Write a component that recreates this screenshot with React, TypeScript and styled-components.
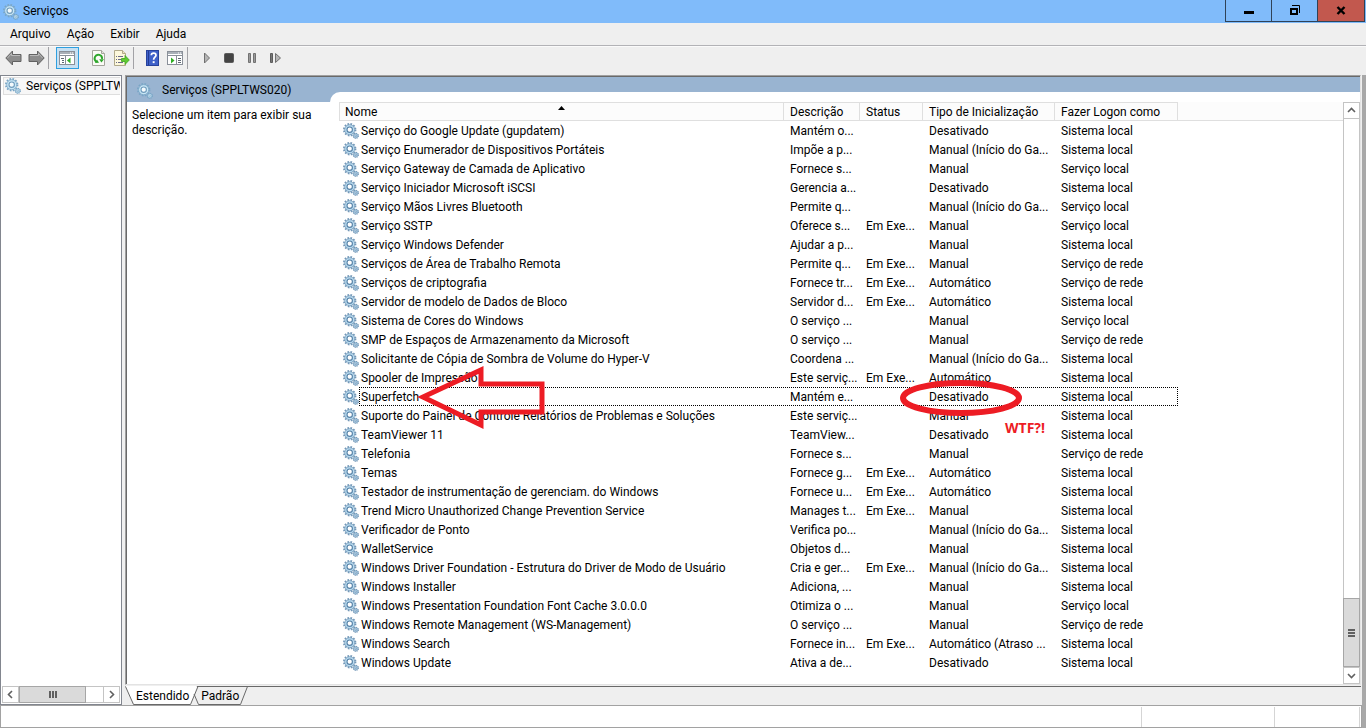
import React from "react";
import styled, { createGlobalStyle } from "styled-components";

const GlobalStyle = createGlobalStyle`
  *, *::before, *::after { box-sizing: border-box; }
  body {
    margin: 0;
    background: #efefef;
    color: #000;
    font: 12px/15px Roboto, "Open Sans", sans-serif;
  }
  button { font: inherit; color: inherit; padding: 0; margin: 0; }
  svg { flex: none; }
`;

const Window = styled.div`
  display: flex;
  flex-direction: column;
  height: 100vh;
  overflow: hidden;
`;

/* ---------- title bar ---------- */

const TitleBar = styled.header`
  display: flex;
  align-items: flex-start;
  height: 23px;
  flex: none;
  padding-left: 3px;
  background: #80bbfa;
`;

const Title = styled.h1`
  flex: 1;
  display: flex;
  align-items: center;
  gap: 4px;
  height: 23px;
  margin: 0;
  font-size: 12px;
  font-weight: 400;
`;

const CaptionButtons = styled.div`
  display: flex;
  height: 22px;
  margin-right: 1px;
  border: 1px solid #2f4257;
  border-top: 0;
`;

const CaptionButton = styled.button<{ $close?: boolean }>`
  display: flex;
  align-items: center;
  justify-content: center;
  width: 46px;
  border: 0;
  border-right: 1px solid #2f4257;
  background: ${(p) => (p.$close ? "#c2584e" : "transparent")};
  &:last-child { border-right: 0; }
`;

/* ---------- menu and toolbar ---------- */

const MenuBar = styled.nav`
  display: flex;
  align-items: center;
  gap: 16px;
  flex: none;
  height: 23px;
  padding: 0 10px;
  border-bottom: 1px solid #b2b2b6;
`;

const MenuItem = styled.button`
  border: 0;
  background: none;
`;

const Toolbar = styled.div`
  display: flex;
  align-items: center;
  flex: none;
  height: 29px;
  padding: 0 2px 6px;
  border-top: 1px solid #fafafa;
`;

const ToolButton = styled.button<{ $active?: boolean }>`
  display: flex;
  align-items: center;
  justify-content: center;
  width: 23px;
  height: 22px;
  border: 1px solid ${(p) => (p.$active ? "#2e9fdf" : "transparent")};
  background: ${(p) => (p.$active ? "#c7e0f2" : "none")};
`;

const ToolDivider = styled.span`
  width: 1px;
  height: 22px;
  margin-right: 7px;
  background: #a2a2a6;
`;

const ToolGroup = styled.div`
  display: flex;
  padding-left: 8px;
`;

/* ---------- panels ---------- */

const Body = styled.main`
  display: flex;
  flex: 1;
  min-height: 0;
`;

const TreePanel = styled.aside`
  display: flex;
  flex-direction: column;
  width: 122px;
  flex: none;
  padding: 1px;
  border: 1px solid #82868f;
  background: #fff;
`;

const TreeArea = styled.div`
  flex: 1;
  padding-left: 1px;
  overflow: hidden;
`;

const TreeItem = styled.div`
  display: flex;
  align-items: center;
  gap: 5px;
  width: 160px;
  height: 18px;
  padding-left: 1px;
  border: 1px solid #dedede;
  background: #f7f7f7;
  white-space: nowrap;
`;

const HScroll = styled.div`
  display: flex;
  height: 17px;
  border: 1px solid #c4c4c4;
`;

const HScrollThumb = styled.div`
  display: flex;
  align-items: center;
  justify-content: center;
  width: 67px;
  margin: -1px 0;
  border: 1px solid #a6a6a6;
  background: #dadada;
`;

const HTrack = styled.div`
  flex: 1;
  background: #fff;
`;

const ScrollArrow = styled.button<{ $edge: "left" | "right" | "top" | "bottom" }>`
  display: flex;
  align-items: center;
  justify-content: center;
  flex: none;
  width: ${(p) => (p.$edge === "left" || p.$edge === "right" ? 16 : 15)}px;
  height: ${(p) => (p.$edge === "left" || p.$edge === "right" ? 15 : 16)}px;
  border: 0 solid #c4c4c4;
  background: #fff;
  border-${(p) => ({ left: "right", right: "left", top: "bottom", bottom: "top" })[p.$edge]}-width: 1px;
`;

const DetailColumn = styled.section`
  display: flex;
  flex-direction: column;
  flex: 1;
  min-width: 0;
  margin: 0 1px 0 3px;
`;

const DetailPanel = styled.div`
  display: flex;
  flex-direction: column;
  flex: 1;
  min-height: 0;
  border: 1px solid #e3e3e3;
  border-top-color: #a0a0a0;
  border-left-color: #a0a0a0;
  background: #fff;
`;

const DetailInner = styled.div`
  display: grid;
  grid-template-columns: 203px minmax(0, 1fr);
  grid-template-rows: 15px 10px minmax(0, 1fr);
  flex: 1;
  min-height: 0;
  border-top: 1px solid #696969;
  border-left: 1px solid #696969;
`;

const DetailTitle = styled.h2`
  display: flex;
  align-items: center;
  gap: 9px;
  grid-area: 1 / 1 / 3 / 2;
  margin: 0;
  padding: 2px 0 0 10px;
  background: #99b4d1;
  font-size: 12px;
  font-weight: 400;
`;

const TitleBand = styled.div`
  grid-area: 1 / 2 / 2 / 3;
  background: #99b4d1;
`;

const CurvedEdge = styled.div`
  grid-area: 2 / 2 / 3 / 3;
  background: #99b4d1;
  &::before {
    content: "";
    display: block;
    height: 100%;
    border-top-left-radius: 10px;
    background: #fff;
  }
`;

const Hint = styled.p`
  grid-area: 3 / 1 / 4 / 2;
  margin: 0;
  padding: 6px 8px 0 5px;
`;

const ListPane = styled.div`
  display: flex;
  grid-area: 3 / 2 / 4 / 3;
  min-height: 0;
  padding-left: 9px;
`;

const ListBody = styled.div`
  position: relative;
  flex: 1;
  min-width: 0;
  overflow: hidden;
`;

const ServiceTable = styled.table`
  width: 100%;
  table-layout: fixed;
  border-collapse: separate;
  border-spacing: 0;
`;

const Column = styled.col<{ $width?: number }>`
  width: ${(p) => (p.$width ? `${p.$width}px` : "auto")};
`;

const HeadCell = styled.th<{ $filler?: boolean }>`
  height: 19px;
  padding: 2px 6px 0;
  border: 1px solid #dfdfdf;
  border-left: 0;
  border-right-width: ${(p) => (p.$filler ? 0 : 1)}px;
  border-top-color: ${(p) => (p.$filler ? "#fcfcfc" : "#dfdfdf")};
  background: #fcfcfc;
  font-weight: 400;
  text-align: left;
  white-space: nowrap;
  &:first-child {
    padding: 2px 5px 0;
    border-left: 1px solid #dfdfdf;
  }
`;

const SortLabel = styled.div`
  display: grid;
  grid-template-columns: 1fr auto 1fr;
`;

const SortArrow = styled.svg`
  display: block;
`;

const Cell = styled.td`
  height: 19px;
  padding: 2px 6px 0;
  line-height: 17px;
  white-space: nowrap;
  overflow: hidden;
`;

const NameCell = styled(Cell)`
  padding: 2px 4px 0;
`;

const ServiceName = styled.div`
  display: flex;
  align-items: flex-start;
  gap: 2px;
`;

const FocusRing = styled.div`
  position: absolute;
  top: 285px;
  left: 20px;
  width: 819px;
  height: 19px;
  border: 1px dotted #000;
`;

const Marks = styled.svg`
  position: absolute;
  top: 260px;
  left: 78px;
`;

const Remark = styled.span`
  position: absolute;
  top: 318px;
  left: 666px;
  color: #ed1c24;
  font: 700 14px/16px "Open Sans", sans-serif;
`;

const VScroll = styled.div`
  display: flex;
  flex-direction: column;
  flex: none;
  width: 17px;
  border: 1px solid #c4c4c4;
`;

const VTrack = styled.div`
  flex: 1;
`;

const VScrollThumb = styled.div`
  display: flex;
  align-items: center;
  justify-content: center;
  height: 69px;
  margin: 0 -1px;
  border: 1px solid #a6a6a6;
  background: #dadada;
`;

/* ---------- tabs and status ---------- */

const TabStrip = styled.div`
  position: relative;
  display: flex;
  flex: none;
  height: 19px;
  padding-left: 11px;
  margin-top: 1px;
  gap: 12px;
  border-top: 1px solid #696969;
`;

const TabShapes = styled.svg`
  position: absolute;
  top: -1px;
  left: 0;
`;

const Tab = styled.button`
  position: relative;
  border: 0;
  background: none;
`;

const RightEdge = styled.div`
  width: 4px;
  flex: none;
  background: #a8a8a8;
`;

const StatusRow = styled.footer`
  display: flex;
  flex: none;
  height: 23px;
`;

const StatusBar = styled.div`
  display: flex;
  justify-content: flex-end;
  flex: 1;
  padding-top: 1px;
  padding-right: 1px;
  border: 1px solid #a2a2a2;
  background: #fff;
`;

const StatusField = styled.div<{ $width: number }>`
  width: ${(p) => p.$width}px;
  border-left: 1px solid #d5d5d5;
  &:last-child { border-right: 1px solid #d5d5d5; }
`;

/* ---------- drawings ---------- */

const Gears = ({ pale = false }: { pale?: boolean }) => {
  const edge = pale ? "#79a6c6" : "#7398b8";
  const fill = pale ? "#c9e7f6" : "#b9dcf1";
  const hub = pale ? "#6f9cbd" : "#5580a6";
  return (
    <svg width="16" height="16" viewBox="0 0 16 16" aria-hidden="true">
      <circle cx="6.7" cy="6.7" r="5.8" fill="none" stroke={edge} strokeWidth="1.8" strokeDasharray="1.7 1.34" />
      <circle cx="6.7" cy="6.7" r="5" fill={fill} stroke={edge} strokeWidth="0.8" />
      <circle cx="6.7" cy="6.7" r="2.7" fill={pale ? "#f4fafd" : "#fff"} stroke={hub} strokeWidth="1.1" />
      <circle cx="12.8" cy="12.8" r="2.5" fill="none" stroke={edge} strokeWidth="1.3" strokeDasharray="1.1 0.86" />
      <circle cx="12.8" cy="12.8" r="2.1" fill={fill} stroke={edge} strokeWidth="0.7" />
      <circle cx="12.8" cy="12.8" r="0.8" fill="#fff" stroke={hub} strokeWidth="0.6" />
    </svg>
  );
};

const BigArrow = ({ right = false }: { right?: boolean }) => (
  <svg width="17" height="16" viewBox="0 0 17 16" aria-hidden="true">
    <path
      d={right ? "M16.2 8L9.5 1V4.5H1V11.5H9.5V15Z" : "M0.8 8L7.5 1V4.5H16V11.5H7.5V15Z"}
      fill="#8c8c8c"
      stroke="#626262"
      strokeLinejoin="round"
    />
    <path d={right ? "M2 5.5H10.5V3.5L14.5 8" : "M2.5 8L6.5 3.5V5.5H15"} fill="none" stroke="#b9b9b9" />
  </svg>
);

const PaneIcon = ({ action = false }: { action?: boolean }) => (
  <svg width="17" height="16" viewBox="0 0 17 16" aria-hidden="true">
    <rect x="0.5" y="1.5" width="15" height="13" fill="#fff" stroke="#8a9099" />
    <rect x="1" y="2" width="14" height="2" fill="#a9b0b8" />
    <path d="M11 3h1M13 3h1" stroke="#fff" />
    <path d="M1 5.5H15" stroke="#8a9099" />
    <path d={action ? "M9.5 6V14" : "M6.5 6V14"} stroke="#8a9099" />
    {action ? (
      <>
        <path d="M4 7.5L7.5 10.5L4 13.5Z" fill="#2fae22" />
        <path d="M11 8.5H14M11 10.5H14M11 12.5H14" stroke="#5d6670" />
      </>
    ) : (
      <>
        <path d="M11.5 7.5L8 10.5L11.5 13.5Z" fill="#2fae22" />
        <path d="M2 8.5H5M3 10.5H5M3 12.5H5" stroke="#5d6670" />
      </>
    )}
  </svg>
);

const RefreshIcon = () => (
  <svg width="16" height="16" viewBox="0 0 16 16" aria-hidden="true">
    <path d="M1.5 0.5H10.5L13.5 3.5V15.5H1.5Z" fill="#fbfbf6" stroke="#a5a59c" />
    <path d="M10.5 0.5V3.5H13.5" fill="#e4e4dc" stroke="#a5a59c" />
    <path d="M5.4 11.6A3.7 3.7 0 1 1 11 9" fill="none" stroke="#2ea62b" strokeWidth="1.9" />
    <path d="M8.2 9.2H13L10.4 12.6Z" fill="#2ea62b" />
    <path d="M4 13L8 12.8L6 9.6Z" fill="#2ea62b" />
  </svg>
);

const ExportIcon = () => (
  <svg width="17" height="16" viewBox="0 0 17 16" aria-hidden="true">
    <path d="M1.5 0.5H9.5L12.5 3.5V15.5H1.5Z" fill="#fdf8dc" stroke="#b0a98a" />
    <path d="M9.5 0.5V3.5H12.5" fill="#efe6bd" stroke="#b0a98a" />
    <path d="M3 6.5H4M5 6.5H10M3 9.5H4M5 9.5H8M3 12.5H4M5 12.5H10" stroke="#6a6a8a" />
    <path d="M8.5 8.5H12V5.5L16.3 10L12 14.5V11.5H8.5Z" fill="#5fcb32" stroke="#3fa41e" strokeWidth="0.8" />
  </svg>
);

const HelpIcon = () => (
  <svg width="13" height="16" viewBox="1 0 13 16" aria-hidden="true">
    <rect x="1.5" y="0.5" width="12" height="15" fill="#3f61c9" stroke="#27429c" />
    <path d="M3.5 1V15" stroke="#243c94" />
    <path d="M6.3 5.2C6.3 2.4 11 2.4 11 5.2C11 7.2 8.6 7.2 8.6 9.8" fill="none" stroke="#fff" strokeWidth="1.7" />
    <rect x="7.7" y="11.2" width="1.9" height="1.9" fill="#fff" />
  </svg>
);

const PlayIcon = () => (
  <svg width="16" height="16" viewBox="0 0 16 16" aria-hidden="true">
    <path d="M5.5 3L10.5 8L5.5 13Z" fill="#b5b5b5" stroke="#707070" />
  </svg>
);
const StopIcon = () => (
  <svg width="17" height="16" viewBox="0 0 17 16" aria-hidden="true">
    <rect x="3.5" y="3.5" width="9" height="9" rx="1" fill="#444" stroke="#5c5c5c" />
  </svg>
);
const PauseIcon = () => (
  <svg width="17" height="16" viewBox="0 0 17 16" aria-hidden="true">
    <path d="M4.5 3.5H6.5V12.5H4.5ZM9.5 3.5H11.5V12.5H9.5Z" fill="#9a9a9a" stroke="#727272" />
  </svg>
);
const RestartIcon = () => (
  <svg width="16" height="16" viewBox="0 0 16 16" aria-hidden="true">
    <path d="M2.5 3.5H4.5V12.5H2.5Z" fill="#777" stroke="#5c5c5c" />
    <path d="M7.5 3.5L12.5 8L7.5 12.5Z" fill="#b5b5b5" stroke="#707070" />
  </svg>
);

const chevrons = {
  left: "M6 1L2.5 4.5L6 8",
  right: "M3 1L6.5 4.5L3 8",
  top: "M1 6L4.5 2.5L8 6",
  bottom: "M1 3L4.5 6.5L8 3",
};

const Chevron = ({ to }: { to: keyof typeof chevrons }) => (
  <svg width="9" height="9" viewBox="0 0 9 9" aria-hidden="true">
    <path d={chevrons[to]} fill="none" stroke="#606060" strokeWidth="1.6" />
  </svg>
);

/* ---------- data ---------- */

const LOCAL = "Sistema local";
const SERVICE = "Serviço local";
const NETWORK = "Serviço de rede";
const RUN = "Em Exe...";
const TRIGGER = "Manual (Início do Ga...";

const services: string[][] = [
  ["Serviço do Google Update (gupdatem)", "Mantém o...", "", "Desativado", LOCAL],
  ["Serviço Enumerador de Dispositivos Portáteis", "Impõe a p...", "", TRIGGER, LOCAL],
  ["Serviço Gateway de Camada de Aplicativo", "Fornece s...", "", "Manual", SERVICE],
  ["Serviço Iniciador Microsoft iSCSI", "Gerencia a...", "", "Desativado", LOCAL],
  ["Serviço Mãos Livres Bluetooth", "Permite q...", "", TRIGGER, SERVICE],
  ["Serviço SSTP", "Oferece s...", RUN, "Manual", SERVICE],
  ["Serviço Windows Defender", "Ajudar a p...", "", "Manual", LOCAL],
  ["Serviços de Área de Trabalho Remota", "Permite q...", RUN, "Manual", NETWORK],
  ["Serviços de criptografia", "Fornece tr...", RUN, "Automático", NETWORK],
  ["Servidor de modelo de Dados de Bloco", "Servidor d...", RUN, "Automático", LOCAL],
  ["Sistema de Cores do Windows", "O serviço ...", "", "Manual", SERVICE],
  ["SMP de Espaços de Armazenamento da Microsoft", "O serviço ...", "", "Manual", NETWORK],
  ["Solicitante de Cópia de Sombra de Volume do Hyper-V", "Coordena ...", "", TRIGGER, LOCAL],
  ["Spooler de Impressão", "Este serviç...", RUN, "Automático", LOCAL],
  ["Superfetch", "Mantém e...", "", "Desativado", LOCAL],
  ["Suporte do Painel de Controle Relatórios de Problemas e Soluções", "Este serviç...", "", "Manual", LOCAL],
  ["TeamViewer 11", "TeamView...", "", "Desativado", LOCAL],
  ["Telefonia", "Fornece s...", "", "Manual", NETWORK],
  ["Temas", "Fornece g...", RUN, "Automático", LOCAL],
  ["Testador de instrumentação de gerenciam. do Windows", "Fornece u...", RUN, "Automático", LOCAL],
  ["Trend Micro Unauthorized Change Prevention Service", "Manages t...", RUN, "Manual", LOCAL],
  ["Verificador de Ponto", "Verifica po...", "", TRIGGER, LOCAL],
  ["WalletService", "Objetos d...", "", "Manual", LOCAL],
  ["Windows Driver Foundation - Estrutura do Driver de Modo de Usuário", "Cria e ger...", RUN, TRIGGER, LOCAL],
  ["Windows Installer", "Adiciona, ...", "", "Manual", LOCAL],
  ["Windows Presentation Foundation Font Cache 3.0.0.0", "Otimiza o ...", "", "Manual", SERVICE],
  ["Windows Remote Management (WS-Management)", "O serviço ...", "", "Manual", NETWORK],
  ["Windows Search", "Fornece in...", RUN, "Automático (Atraso ...", LOCAL],
  ["Windows Update", "Ativa a de...", "", "Desativado", LOCAL],
];

export default function App() {
  return (
    <Window>
      <GlobalStyle />
      <TitleBar>
        <Title>
          <Gears pale />
          Serviços
        </Title>
        <CaptionButtons>
          <CaptionButton aria-label="Minimizar">
            <svg width="12" height="12"><rect x="1" y="6" width="10" height="3" /></svg>
          </CaptionButton>
          <CaptionButton aria-label="Restaurar">
            <svg width="12" height="12">
              <rect x="2" y="4" width="6" height="5" fill="none" stroke="#000" strokeWidth="2" />
              <path d="M3 0.5H10.5V8" fill="none" stroke="#000" />
            </svg>
          </CaptionButton>
          <CaptionButton aria-label="Fechar" $close>
            <svg width="12" height="12">
              <path d="M2.5 2L9.5 9M9.5 2L2.5 9" stroke="#000" strokeWidth="2.4" />
            </svg>
          </CaptionButton>
        </CaptionButtons>
      </TitleBar>

      <MenuBar>
        <MenuItem>Arquivo</MenuItem>
        <MenuItem>Ação</MenuItem>
        <MenuItem>Exibir</MenuItem>
        <MenuItem>Ajuda</MenuItem>
      </MenuBar>

      <Toolbar>
        <ToolButton aria-label="Voltar"><BigArrow /></ToolButton>
        <ToolButton aria-label="Avançar"><BigArrow right /></ToolButton>
        <ToolDivider />
        <ToolButton aria-label="Mostrar árvore" $active><PaneIcon /></ToolButton>
        <ToolGroup>
          <ToolButton aria-label="Atualizar"><RefreshIcon /></ToolButton>
          <ToolButton aria-label="Exportar lista"><ExportIcon /></ToolButton>
        </ToolGroup>
        <ToolDivider />
        <ToolButton aria-label="Ajuda"><HelpIcon /></ToolButton>
        <ToolButton aria-label="Painel de ações"><PaneIcon action /></ToolButton>
        <ToolDivider />
        <ToolButton aria-label="Iniciar"><PlayIcon /></ToolButton>
        <ToolButton aria-label="Parar"><StopIcon /></ToolButton>
        <ToolButton aria-label="Pausar"><PauseIcon /></ToolButton>
        <ToolButton aria-label="Reiniciar"><RestartIcon /></ToolButton>
      </Toolbar>

      <Body>
        <TreePanel>
          <TreeArea>
            <TreeItem>
              <Gears pale />
              Serviços (SPPLTWS020)
            </TreeItem>
          </TreeArea>
          <HScroll>
            <ScrollArrow $edge="left" aria-label="Rolar para a esquerda"><Chevron to="left" /></ScrollArrow>
            <HScrollThumb>
              <svg width="8" height="7"><path d="M1 0V7M4 0V7M7 0V7" stroke="#606060" strokeWidth="2" /></svg>
            </HScrollThumb>
            <HTrack />
            <ScrollArrow $edge="right" aria-label="Rolar para a direita"><Chevron to="right" /></ScrollArrow>
          </HScroll>
        </TreePanel>

        <DetailColumn>
          <DetailPanel>
            <DetailInner>
              <DetailTitle>
                <Gears pale />
                Serviços (SPPLTWS020)
              </DetailTitle>
              <TitleBand />
              <CurvedEdge />
              <Hint>Selecione um item para exibir sua descrição.</Hint>
              <ListPane>
                <ListBody>
                  <ServiceTable>
                    <colgroup>
                      <Column $width={445} />
                      <Column $width={76} />
                      <Column $width={63} />
                      <Column $width={132} />
                      <Column $width={123} />
                      <Column />
                    </colgroup>
                    <thead>
                      <tr>
                        <HeadCell>
                          <SortLabel>
                            Nome
                            <SortArrow width="7" height="5"><path d="M3.5 1L7 5H0Z" /></SortArrow>
                          </SortLabel>
                        </HeadCell>
                        <HeadCell>Descrição</HeadCell>
                        <HeadCell>Status</HeadCell>
                        <HeadCell>Tipo de Inicialização</HeadCell>
                        <HeadCell>Fazer Logon como</HeadCell>
                        <HeadCell as="td" $filler />
                      </tr>
                    </thead>
                    <tbody>
                      {services.map(([name, ...rest]) => (
                        <tr key={name}>
                          <NameCell>
                            <ServiceName>
                              <Gears />
                              {name}
                            </ServiceName>
                          </NameCell>
                          {rest.map((value, i) => (
                            <Cell key={i}>{value}</Cell>
                          ))}
                          <Cell />
                        </tr>
                      ))}
                    </tbody>
                  </ServiceTable>
                  <FocusRing />
                  <Marks width="610" height="70" viewBox="0 0 610 70" aria-hidden="true">
                    <g fill="none" stroke="#ed1c24">
                      <path d="M6 35L64 8V22H125V50H64V63Z" strokeWidth="5" />
                      <ellipse cx="544" cy="36" rx="58" ry="15" strokeWidth="6" />
                    </g>
                  </Marks>
                  <Remark>WTF?!</Remark>
                </ListBody>
                <VScroll>
                  <ScrollArrow $edge="top" aria-label="Rolar para cima"><Chevron to="top" /></ScrollArrow>
                  <VTrack />
                  <VScrollThumb>
                    <svg width="7" height="8"><path d="M0 1H7M0 4H7M0 7H7" stroke="#606060" strokeWidth="2" /></svg>
                  </VScrollThumb>
                  <ScrollArrow $edge="bottom" aria-label="Rolar para baixo"><Chevron to="bottom" /></ScrollArrow>
                </VScroll>
              </ListPane>
            </DetailInner>
          </DetailPanel>
          <TabStrip>
            <TabShapes width="130" height="19" viewBox="0 0 130 19" aria-hidden="true">
              <path d="M0 0H72L66 18H9Z" fill="#fff" />
              <path d="M0.5 0.5L8.5 18.5H65.5L73 0.5M69 8L73.5 18.5H115.5L122.5 0.5" fill="none" stroke="#696969" />
            </TabShapes>
            <Tab>Estendido</Tab>
            <Tab>Padrão</Tab>
          </TabStrip>
        </DetailColumn>
        <RightEdge />
      </Body>

      <StatusRow>
        <StatusBar>
          <StatusField $width={133} />
          <StatusField $width={86} />
        </StatusBar>
        <RightEdge />
      </StatusRow>
    </Window>
  );
}
